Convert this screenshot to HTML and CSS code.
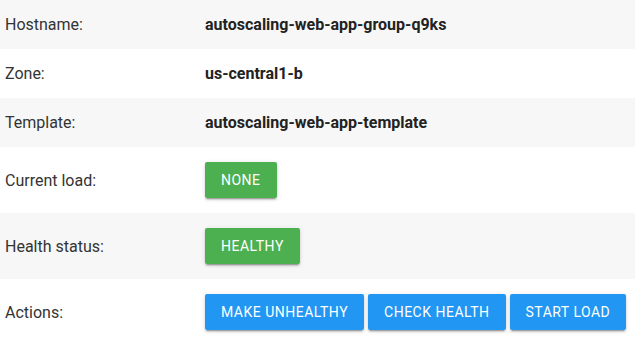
FILE: index.html
```html
<!DOCTYPE html>
<html lang="en">
<head>
  <meta charset="UTF-8">
  <title>Autoscaling web app</title>
  <link rel="stylesheet" href="styles.css">
</head>
<body>

  <table class="info">
    <tr>
      <td class="label">Hostname:</td>
      <td class="value">autoscaling-web-app-group-q9ks</td>
    </tr>
    <tr>
      <td class="label">Zone:</td>
      <td class="value">us-central1-b</td>
    </tr>
    <tr>
      <td class="label">Template:</td>
      <td class="value">autoscaling-web-app-template</td>
    </tr>
    <tr class="btn-row">
      <td class="label">Current load:</td>
      <td><button class="btn green">None</button></td>
    </tr>
    <tr class="btn-row">
      <td class="label">Health status:</td>
      <td><button class="btn green">Healthy</button></td>
    </tr>
    <tr class="btn-row">
      <td class="label">Actions:</td>
      <td>
        <button class="btn blue">Make unhealthy</button>
        <button class="btn blue">Check health</button>
        <button class="btn blue">Start load</button>
      </td>
    </tr>
  </table>

</body>
</html>
```

FILE: styles.css
```css
body {
  margin: 0;
  font-family: Roboto, "Liberation Sans", sans-serif;
  font-size: 16px;
  color: #333;
  background: #fff;
}

.info {
  width: 100%;
  border-collapse: collapse;
}

.info tr:nth-child(odd) {
  background: #f7f7f7;
}

.info td {
  padding: 15px 5px;
  line-height: 19px;
  vertical-align: middle;
}

.info td.label {
  width: 190px;
}

.value {
  font-weight: bold;
  color: #222;
}

.btn {
  height: 36px;
  padding: 0 16px;
  border: none;
  border-radius: 2px;
  font-family: Roboto, "Liberation Sans", sans-serif;
  font-size: 14px;
  letter-spacing: 0.5px;
  text-transform: uppercase;
  color: #fff;
  vertical-align: middle;
  box-shadow: 0 2px 2px rgba(0, 0, 0, 0.14), 0 3px 1px -2px rgba(0, 0, 0, 0.2), 0 1px 5px rgba(0, 0, 0, 0.12);
}

.green {
  background: #4caf50;
}

.blue {
  background: #2196f3;
}
```
